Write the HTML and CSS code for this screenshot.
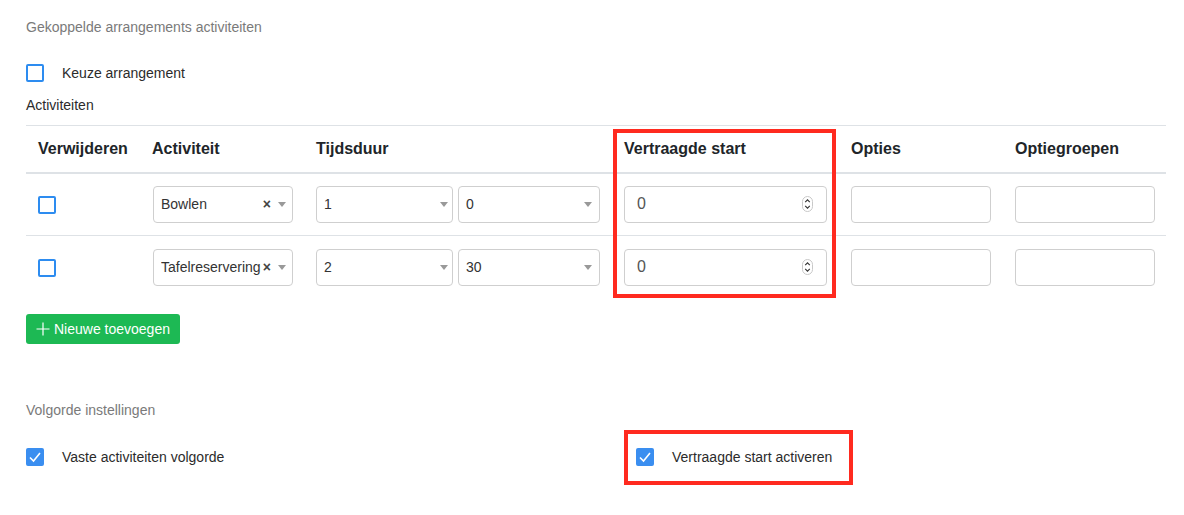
FILE: index.html
```html
<!DOCTYPE html>
<html>
<head>
<meta charset="utf-8">
<link rel="stylesheet" href="styles.css">
</head>
<body>
<div class="page">
  <div class="section-title">Gekoppelde arrangements activiteiten</div>
  <label class="check-row keuze"><span class="cb"></span><span>Keuze arrangement</span></label>
  <div class="sub-label">Activiteiten</div>
  <div class="table-wrap">
    <table class="act-table">
      <colgroup>
        <col class="c1"><col class="c2"><col class="c3"><col class="c4"><col class="c5"><col class="c6">
      </colgroup>
      <thead>
        <tr><th>Verwijderen</th><th>Activiteit</th><th>Tijdsduur</th><th>Vertraagde start</th><th>Opties</th><th>Optiegroepen</th></tr>
      </thead>
      <tbody>
        <tr>
          <td><span class="cb"></span></td>
          <td><div class="sel act"><span class="val">Bowlen</span><span class="x">×</span><span class="caret"></span></div></td>
          <td><div class="dur"><div class="sel h"><span class="val">1</span><span class="caret"></span></div><div class="sel m"><span class="val">0</span><span class="caret"></span></div></div></td>
          <td><div class="num"><span>0</span><span class="spin"><svg width="11" height="16" viewBox="0 0 11 16"><rect x="0.5" y="0.5" width="10" height="15" rx="5" fill="#fff" stroke="#c8c8c8"/><path d="M3.2 6.2 5.5 3.9 7.8 6.2M3.2 9.8 5.5 12.1 7.8 9.8" fill="none" stroke="#333" stroke-width="1.1"/></svg></span></div></td>
          <td><div class="txt"></div></td>
          <td><div class="txt"></div></td>
        </tr>
        <tr>
          <td><span class="cb"></span></td>
          <td><div class="sel act"><span class="val">Tafelreservering</span><span class="x">×</span><span class="caret"></span></div></td>
          <td><div class="dur"><div class="sel h"><span class="val">2</span><span class="caret"></span></div><div class="sel m"><span class="val">30</span><span class="caret"></span></div></div></td>
          <td><div class="num"><span>0</span><span class="spin"><svg width="11" height="16" viewBox="0 0 11 16"><rect x="0.5" y="0.5" width="10" height="15" rx="5" fill="#fff" stroke="#c8c8c8"/><path d="M3.2 6.2 5.5 3.9 7.8 6.2M3.2 9.8 5.5 12.1 7.8 9.8" fill="none" stroke="#333" stroke-width="1.1"/></svg></span></div></td>
          <td><div class="txt"></div></td>
          <td><div class="txt"></div></td>
        </tr>
      </tbody>
    </table>
    <div class="hl hl-col"></div>
  </div>
  <button class="btn-add"><svg width="14" height="14" viewBox="0 0 14 14"><path d="M7 0.5V13.5M0.5 7H13.5" stroke="#fff" stroke-width="1.2"/></svg>Nieuwe toevoegen</button>
  <div class="section-title volg">Volgorde instellingen</div>
  <div class="opts">
    <label class="check-row"><span class="cb on"><svg width="18" height="18" viewBox="0 0 18 18"><path d="M4 9.5 7.5 13 14 5" fill="none" stroke="#fff" stroke-width="1.6"/></svg></span><span>Vaste activiteiten volgorde</span></label>
    <div class="opt-right">
      <label class="check-row"><span class="cb on"><svg width="18" height="18" viewBox="0 0 18 18"><path d="M4 9.5 7.5 13 14 5" fill="none" stroke="#fff" stroke-width="1.6"/></svg></span><span>Vertraagde start activeren</span></label>
      <div class="hl hl-opt"></div>
    </div>
  </div>
</div>
</body>
</html>
```
FILE: styles.css
```css
* { box-sizing: border-box; }
html, body { margin: 0; background: #fff; min-height: 515px; }
body { font-family: "Liberation Sans", Arial, sans-serif; color: #212529; }
.page { padding: 17px 18px 0 26px; width: 1184px; min-height: 515px; }
.section-title { font-size: 14px; color: #7a7a7a; line-height: 20px; }
.check-row { display: flex; align-items: center; font-size: 14px; color: #2b2b2b; line-height: 20px; }
.check-row .cb { margin-right: 18px; }
.keuze { margin-top: 26px; }
.sub-label { font-size: 14px; color: #2b2b2b; margin-top: 12px; line-height: 20px; }
.cb { display: inline-block; width: 18px; height: 18px; border: 2px solid #2d8cf0; border-radius: 2px; flex: none; position: relative; }
.cb.on { background: #3a8ef0; border-color: #3a8ef0; }
.cb.on svg { position: absolute; left: -2px; top: -2px; }
.table-wrap { position: relative; margin-top: 10px; width: 1140px; }
.act-table { width: 1140px; border-collapse: collapse; table-layout: fixed; border-top: 1px solid #dee2e6; }
.c1 { width: 114px; } .c2 { width: 164px; } .c3 { width: 308px; } .c4 { width: 227px; } .c5 { width: 164px; } .c6 { width: 163px; }
.act-table th { text-align: left; font-size: 16px; font-weight: bold; color: #212529; padding: 0 12px; height: 47px; border-bottom: 2px solid #dee2e6; vertical-align: middle; }
.act-table td { padding: 0 12px; height: 63px; vertical-align: middle; border-bottom: 1px solid #dee2e6; }
.act-table tbody tr:last-child td { border-bottom: none; }
.act-table td:first-child .cb { margin-top: 6px; }
.sel { display: flex; align-items: center; height: 37px; border: 1px solid #cfcfcf; border-radius: 4px; padding: 0 6px 0 7px; font-size: 14px; color: #333; background: #fff; }
.sel .val { flex: 1; white-space: nowrap; overflow: hidden; }
.sel .x { font-size: 14px; font-weight: bold; color: #444; margin: 0 4px 0 1px; }
.caret { width: 0; height: 0; border-left: 4px solid transparent; border-right: 4px solid transparent; border-top: 5px solid #999; margin-left: 3px; }
.sel.act { width: 140px; margin-left: 1px; padding-right: 6px; }
.dur { display: flex; gap: 5px; }
.sel.h { width: 137px; padding-right: 4px; }
.sel.m { width: 142px; padding-right: 7px; }
.num { display: flex; align-items: center; justify-content: space-between; width: 203px; height: 37px; border: 1px solid #cfcfcf; border-radius: 4px; padding: 0 13px 0 12px; font-size: 16px; color: #555; }
.spin { display: flex; }
.txt { width: 140px; height: 37px; border: 1px solid #cfcfcf; border-radius: 4px; }
.hl { position: absolute; border: 4px solid #ff2a1f; pointer-events: none; }
.hl-col { left: 587px; top: 4px; width: 223px; height: 169px; }
.btn-add { display: flex; align-items: center; gap: 4px; margin-top: 15px; height: 30px; width: 154px; padding: 0 0 0 10px; border: none; border-radius: 3px; background: #1db954; color: #fff; font-family: "Liberation Sans", Arial, sans-serif; font-size: 14px; }
.volg { margin-top: 56px; }
.opts { display: flex; margin-top: 27px; }
.opts > .check-row { width: 610px; }
.opt-right { position: relative; }
.hl-opt { left: -12px; top: -17px; width: 229px; height: 55px; }
```
